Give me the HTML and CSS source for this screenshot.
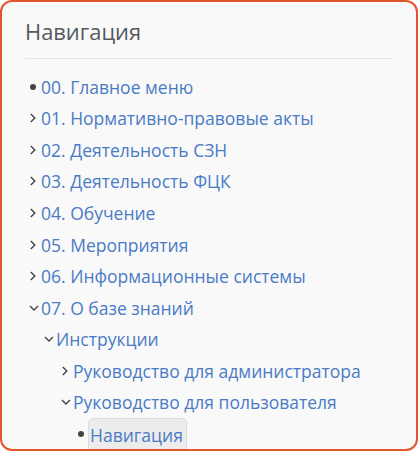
FILE: index.html
```html
<!DOCTYPE html>
<html lang="ru">
<head>
<meta charset="utf-8">
<link rel="stylesheet" href="styles.css">
</head>
<body>
<div class="card">
  <h2 class="title">Навигация</h2>
  <div class="rule"></div>
  <ul class="tree">
    <li class="row lvl0"><span class="ic"><span class="dot"></span></span><a>00. Главное меню</a></li>
    <li class="row lvl0"><span class="ic"><svg width="8" height="10" viewBox="0 0 8 10"><path d="M1.8 1 L5.8 5 L1.8 9" fill="none" stroke="#444" stroke-width="1.4"/></svg></span><a>01. Нормативно-правовые акты</a></li>
    <li class="row lvl0"><span class="ic"><svg width="8" height="10" viewBox="0 0 8 10"><path d="M1.8 1 L5.8 5 L1.8 9" fill="none" stroke="#444" stroke-width="1.4"/></svg></span><a>02. Деятельность СЗН</a></li>
    <li class="row lvl0"><span class="ic"><svg width="8" height="10" viewBox="0 0 8 10"><path d="M1.8 1 L5.8 5 L1.8 9" fill="none" stroke="#444" stroke-width="1.4"/></svg></span><a>03. Деятельность ФЦК</a></li>
    <li class="row lvl0"><span class="ic"><svg width="8" height="10" viewBox="0 0 8 10"><path d="M1.8 1 L5.8 5 L1.8 9" fill="none" stroke="#444" stroke-width="1.4"/></svg></span><a>04. Обучение</a></li>
    <li class="row lvl0"><span class="ic"><svg width="8" height="10" viewBox="0 0 8 10"><path d="M1.8 1 L5.8 5 L1.8 9" fill="none" stroke="#444" stroke-width="1.4"/></svg></span><a>05. Мероприятия</a></li>
    <li class="row lvl0"><span class="ic"><svg width="8" height="10" viewBox="0 0 8 10"><path d="M1.8 1 L5.8 5 L1.8 9" fill="none" stroke="#444" stroke-width="1.4"/></svg></span><a>06. Информационные системы</a></li>
    <li class="row lvl0"><span class="ic"><svg width="10" height="8" viewBox="0 0 10 8"><path d="M1 2 L5 6 L9 2" fill="none" stroke="#444" stroke-width="1.4"/></svg></span><a>07. О базе знаний</a></li>
    <li class="row lvl1"><span class="ic"><svg width="10" height="8" viewBox="0 0 10 8"><path d="M1 2 L5 6 L9 2" fill="none" stroke="#444" stroke-width="1.4"/></svg></span><a>Инструкции</a></li>
    <li class="row lvl2"><span class="ic"><svg width="8" height="10" viewBox="0 0 8 10"><path d="M1.8 1 L5.8 5 L1.8 9" fill="none" stroke="#444" stroke-width="1.4"/></svg></span><a>Руководство для администратора</a></li>
    <li class="row lvl2"><span class="ic"><svg width="10" height="8" viewBox="0 0 10 8"><path d="M1 2 L5 6 L9 2" fill="none" stroke="#444" stroke-width="1.4"/></svg></span><a>Руководство для пользователя</a></li>
    <li class="row lvl3"><span class="ic"><span class="dot"></span></span><a class="active">Навигация</a></li>
  </ul>
</div>
</body>
</html>
```
FILE: styles.css
```css
html, body {
  margin: 0;
  padding: 0;
  background: #ffffff;
}
.card {
  box-sizing: border-box;
  width: 418px;
  height: 451px;
  border: 2px solid #e2562b;
  border-radius: 12px;
  background: #f9f9f9;
  padding: 14px 24px 0 23px;
  overflow: hidden;
  font-family: "Open Sans", "Noto Sans", sans-serif;
}
.title {
  margin: 0;
  font-size: 21.9px;
  font-weight: 400;
  color: #555a5f;
  line-height: 32px;
}
.rule {
  height: 1px;
  background: #e3e3e3;
  margin-top: 10px;
}
.tree {
  list-style: none;
  margin: 12px 0 0 0;
  padding: 0;
}
.row {
  display: flex;
  align-items: center;
  height: 31.55px;
  font-size: 17.5px;
}
.row a {
  color: #4a7bc5;
  text-decoration: none;
  white-space: nowrap;
}
.ic {
  width: 12px;
  flex: 0 0 12px;
  display: flex;
  align-items: center;
  justify-content: flex-start;
}
.lvl0 { padding-left: 4px; }
.lvl1 { padding-left: 19px; }
.lvl2 { padding-left: 36px; }
.lvl3 { padding-left: 52px; }
.dot {
  width: 6px;
  height: 6px;
  border-radius: 50%;
  background: #444;
  margin-left: 1px;
}
.active {
  background: #ececec;
  border: 1px solid #dcdcdc;
  border-radius: 5px;
  padding: 4px 3px 4px 1px;
  margin-left: -1px;
  margin-top: 2px;
}
```
